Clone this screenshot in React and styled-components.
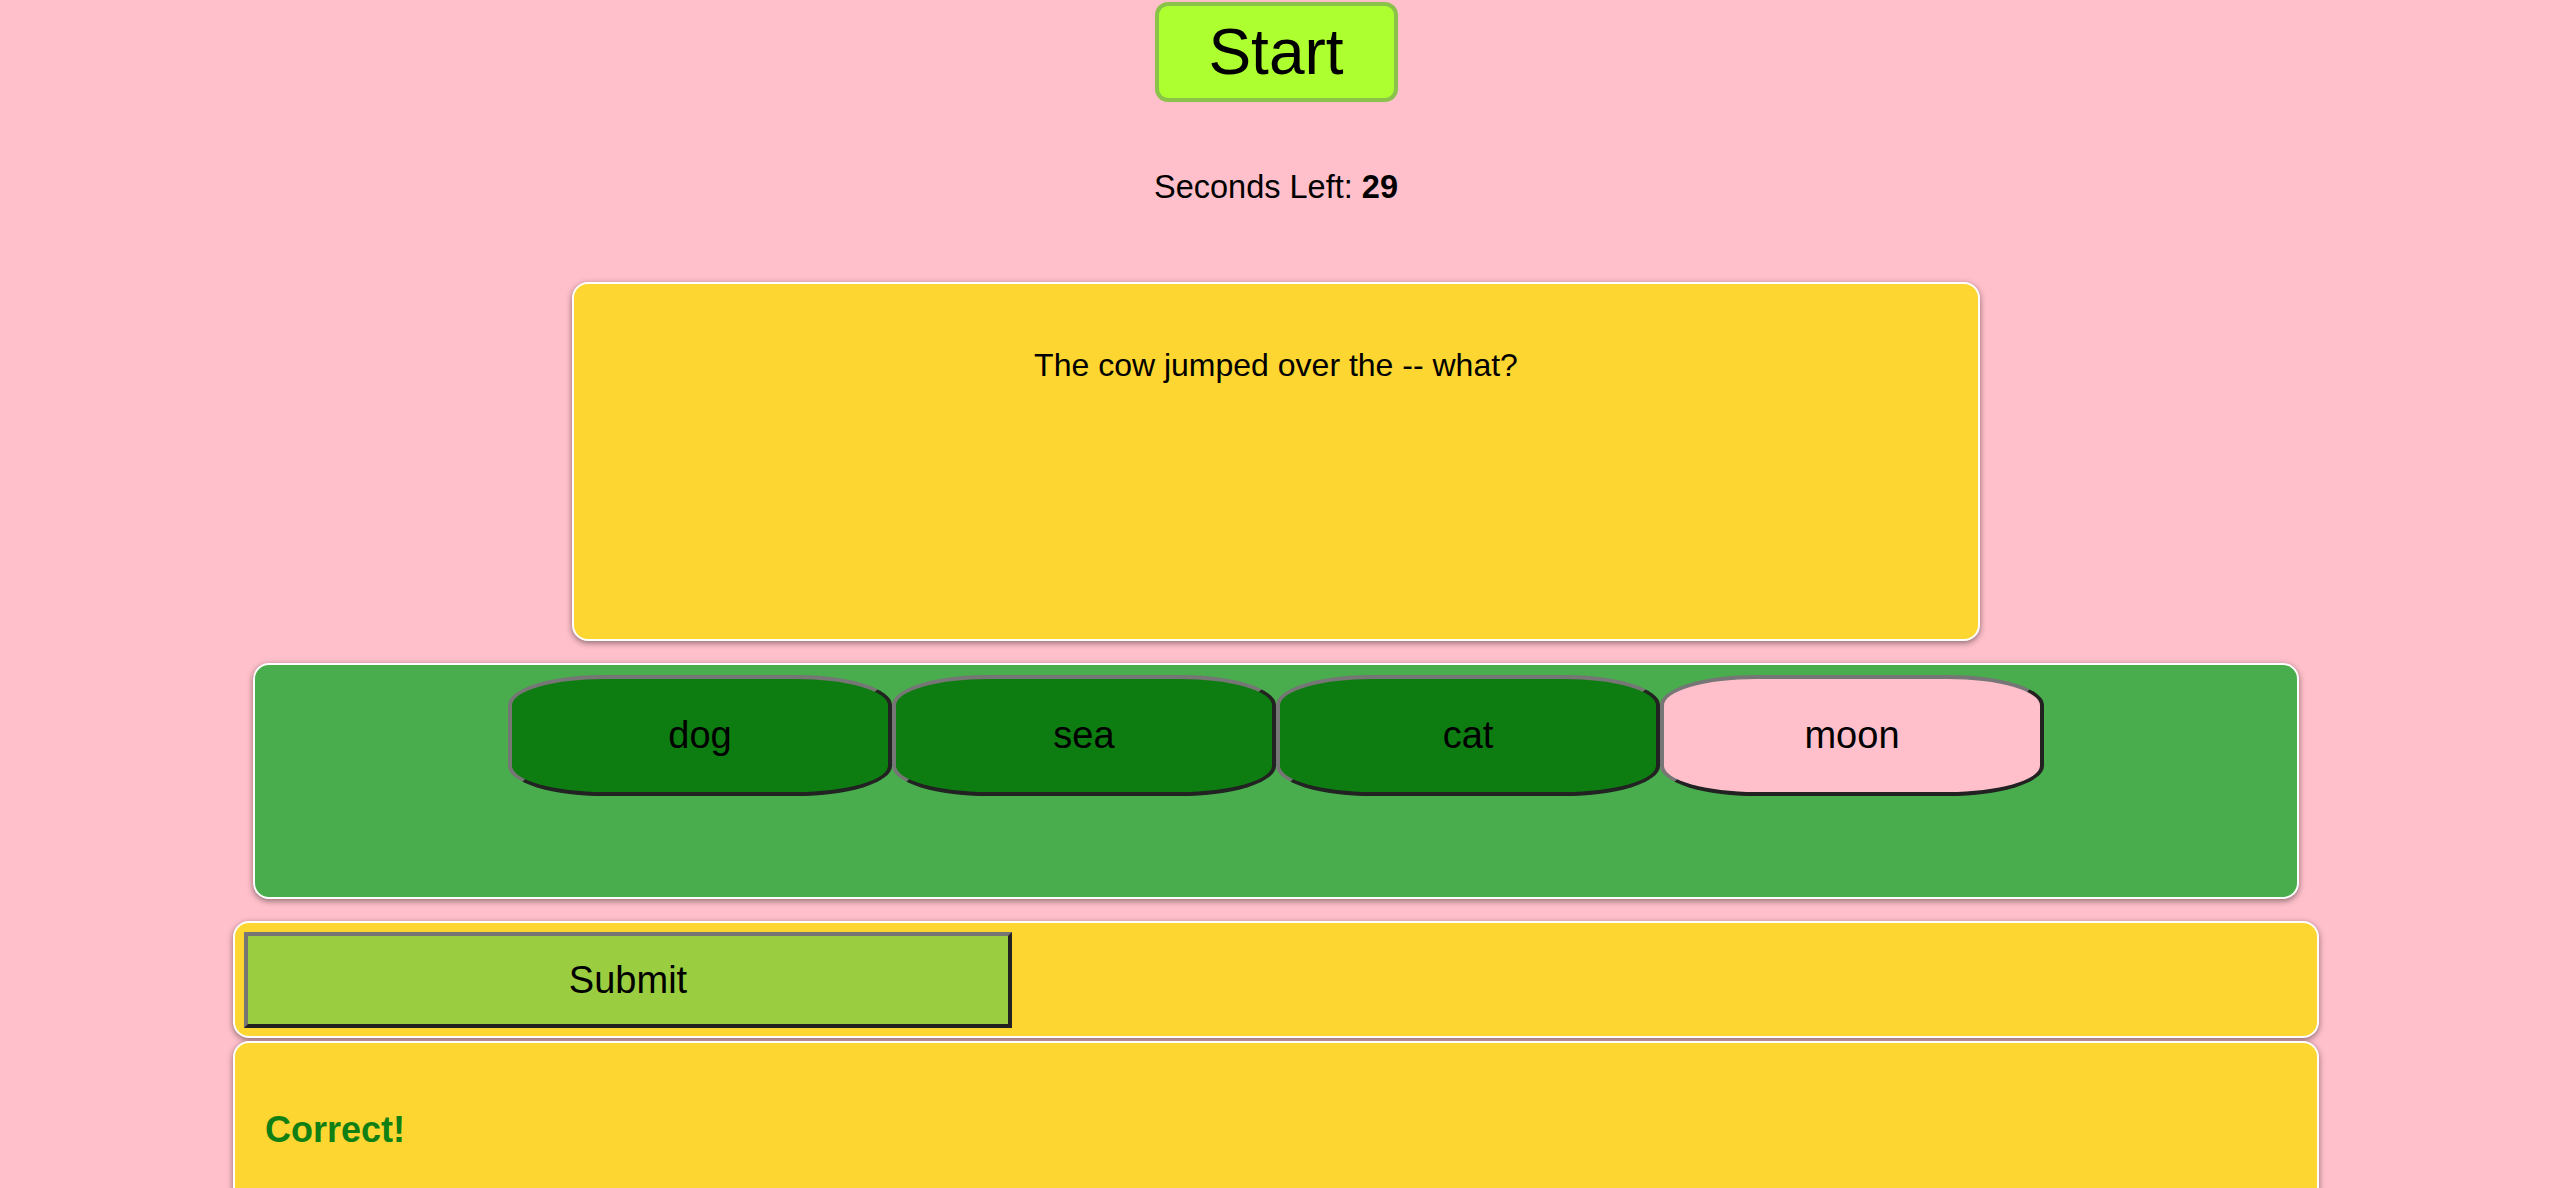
import React from "react";
import styled, { createGlobalStyle } from "styled-components";

const GlobalStyle = createGlobalStyle`
  html, body {
    margin: 0;
    padding: 0;
    background: #ffc0cb;
    font-family: "Liberation Sans", Arial, Helvetica, sans-serif;
    color: #000;
  }
  body { overflow: hidden; }
`;

const Page = styled.main`
  width: 2552px;
  display: flex;
  flex-direction: column;
  align-items: center;
`;

const StartButton = styled.button`
  margin-top: 2px;
  box-sizing: border-box;
  width: 243px;
  height: 100px;
  padding: 0;
  border: 4px solid #8bc34a;
  border-radius: 13px;
  background: #adff2f;
  font-family: inherit;
  font-size: 64px;
  line-height: 1;
  color: #000;
  cursor: pointer;
`;

const Timer = styled.p`
  margin: 66px 0 0;
  font-size: 32.5px;
  line-height: 38px;
  b { font-weight: 700; }
`;

const Card = styled.section`
  box-sizing: border-box;
  width: ${(p) => p.$width}px;
  height: ${(p) => p.$height}px;
  margin-top: ${(p) => p.$gap}px;
  background: ${(p) => p.$bg};
  border: 2px solid #fff;
  border-radius: 16px;
  box-shadow: 0 2px 6px rgba(0, 0, 0, 0.45);
  flex-shrink: 0;
`;

const QuestionText = styled.p`
  margin: 0;
  padding-top: 63px;
  text-align: center;
  font-size: 32px;
  line-height: 37px;
`;

const AnswerRow = styled.div`
  display: flex;
  justify-content: center;
  padding-top: 10px;
`;

const AnswerButton = styled.button`
  box-sizing: border-box;
  width: 384px;
  height: 121px;
  padding: 0;
  border: 4px solid;
  border-color: #767676 #222 #222 #767676;
  border-radius: 25%;
  background: ${(p) => (p.$selected ? "#ffc0cb" : "#0d7c11")};
  font-family: inherit;
  font-size: 38px;
  color: #000;
  cursor: pointer;
`;

const SubmitPanel = styled(Card)`
  padding: 9px;
`;

const SubmitButton = styled.button`
  box-sizing: border-box;
  width: 768px;
  height: 96px;
  padding: 0;
  border: 4px solid;
  border-color: #767676 #222 #222 #767676;
  border-radius: 0;
  background: #9acd3f;
  font-family: inherit;
  font-size: 38px;
  color: #000;
  cursor: pointer;
`;

const Feedback = styled.h3`
  margin: 0;
  padding: 66px 0 0 30px;
  font-size: 36px;
  line-height: 42px;
  font-weight: 700;
  color: #108014;
`;

const answers = [
  { label: "dog" },
  { label: "sea" },
  { label: "cat" },
  { label: "moon", selected: true },
];

export default function App() {
  return (
    <>
      <GlobalStyle />
      <Page>
        <StartButton>Start</StartButton>
        <Timer>
          Seconds Left: <b>29</b>
        </Timer>
        <Card $width={1408} $height={359} $gap={76} $bg="#fdd631">
          <QuestionText>The cow jumped over the -- what?</QuestionText>
        </Card>
        <Card $width={2046} $height={236} $gap={22} $bg="#4aad4d">
          <AnswerRow>
            {answers.map((a) => (
              <AnswerButton key={a.label} $selected={a.selected}>
                {a.label}
              </AnswerButton>
            ))}
          </AnswerRow>
        </Card>
        <SubmitPanel $width={2086} $height={117} $gap={22} $bg="#fdd631">
          <SubmitButton>Submit</SubmitButton>
        </SubmitPanel>
        <Card $width={2086} $height={220} $gap={3} $bg="#fdd631">
          <Feedback>Correct!</Feedback>
        </Card>
      </Page>
    </>
  );
}
